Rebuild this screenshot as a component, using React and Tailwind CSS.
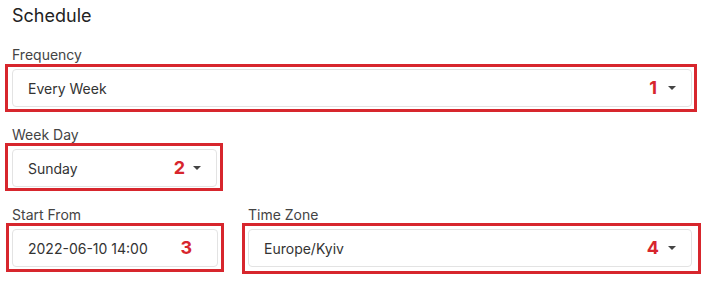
import React from 'react';

// small down caret used by the select fields
const Caret = () => (
  <svg width="8" height="4" viewBox="0 0 8 4" className="shrink-0">
    <path d="M0 0h8L4 4z" fill="#444" />
  </svg>
);

const Field = ({ label, value, mark, select = true, box, markGap = 'mr-[11px]', className = '' }) => (
  <div className={className}>
    <div className="text-[14px] leading-[18px] text-[#444] mb-[5px]">{label}</div>
    <div className="relative h-[38px]">
      <div className="h-full flex items-center border border-[#e3e3e3] rounded-[4px] bg-white pl-[15px] pr-[15px]">
        <span className="flex-1 text-[14px] text-[#333]">{value}</span>
        <span className={`text-[18px] font-bold text-[#d7262d] leading-none ${markGap}`}>{mark}</span>
        {select && <Caret />}
      </div>
      <div className={`absolute border-[3px] border-[#d7262d] pointer-events-none ${box}`} />
    </div>
  </div>
);

export default function App() {
  return (
    <div className="w-[705px] h-[289px] bg-white pl-3 pr-[13px] pt-[7px] font-['Inter',sans-serif] overflow-hidden">
      <h2 className="text-[18px] leading-[18px] text-[#222] mb-[21px]">Schedule</h2>

      <div className="flex flex-col gap-[19px]">
        <Field
          label="Frequency"
          value="Every Week"
          mark="1"
          box="-left-[7px] -right-[5px] -top-[5px] -bottom-[5px]"
        />
        <Field
          label="Week Day"
          value="Sunday"
          mark="2"
          markGap="mr-[8px]"
          className="w-[205px]"
          box="-left-[7px] -right-[6px] -top-[6px] -bottom-[4px]"
        />
        <div className="flex gap-[30px]">
          <Field
            label="Start From"
            value="2022-06-10 14:00"
            mark="3"
            select={false}
            markGap="mr-[10px]"
            className="w-[206px]"
            box="-left-[6px] -right-[6px] -top-[6px] -bottom-[5px]"
          />
          <Field
            label="Time Zone"
            value="Europe/Kyiv"
            mark="4"
            markGap="mr-[9px]"
            className="flex-1"
            box="-left-[6px] -right-[9px] -top-[6px] -bottom-[7px]"
          />
        </div>
      </div>
    </div>
  );
}
